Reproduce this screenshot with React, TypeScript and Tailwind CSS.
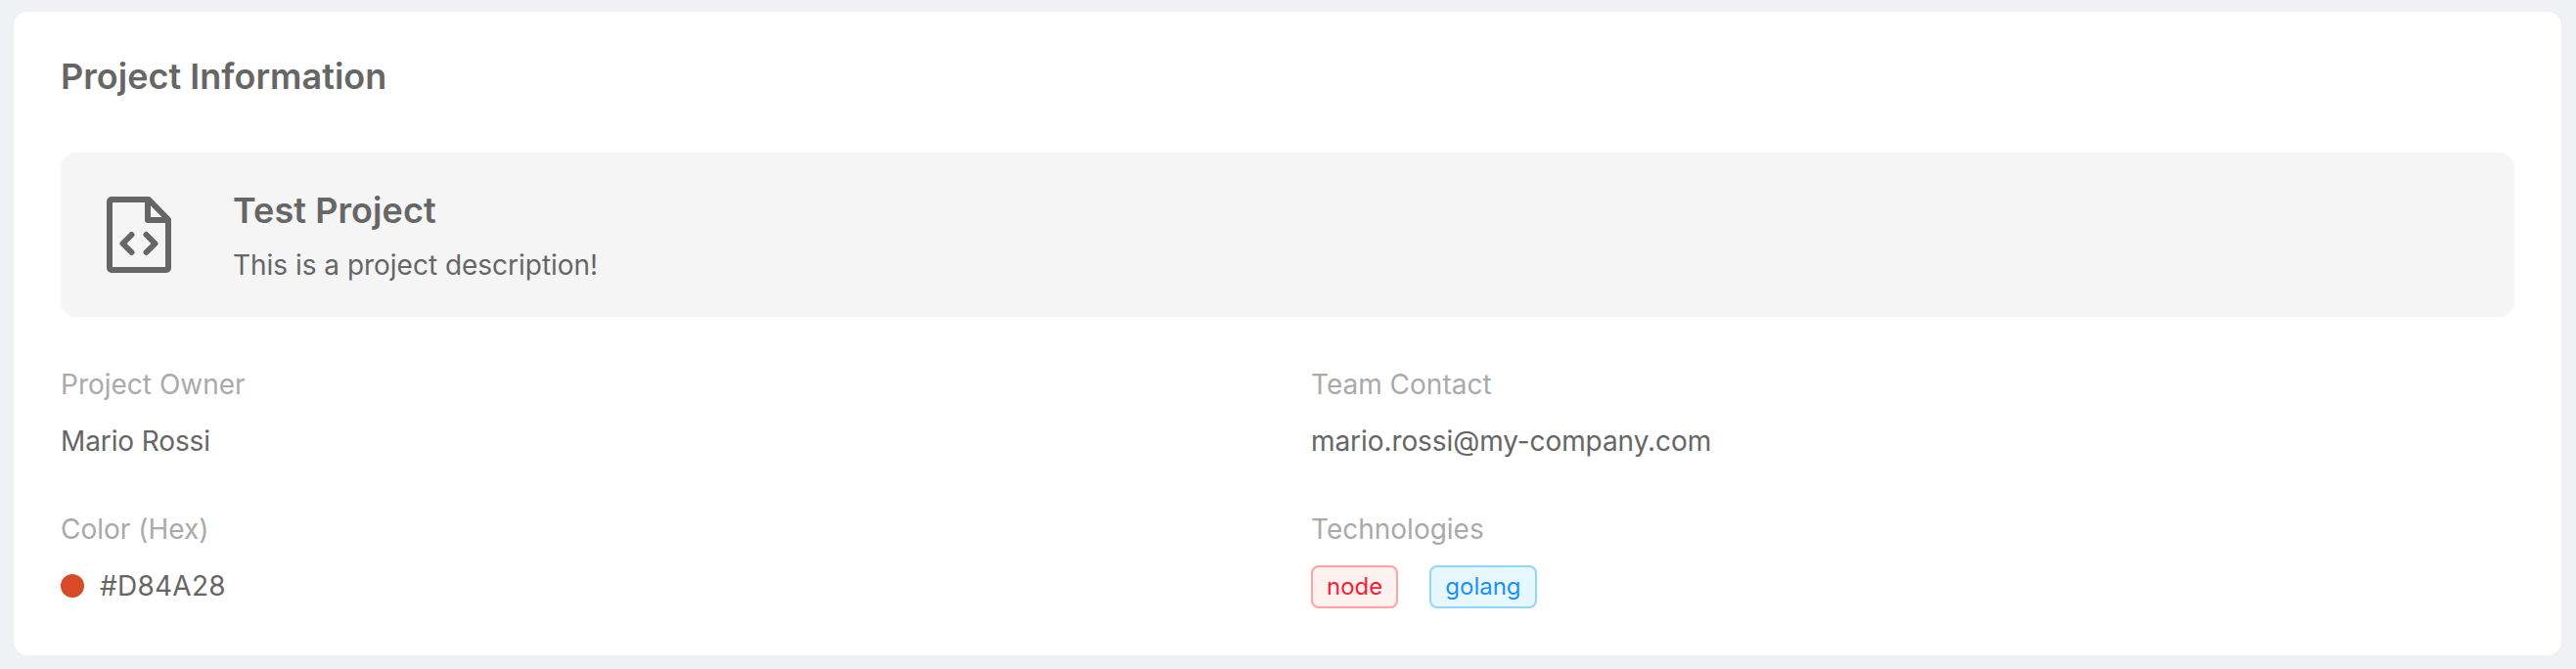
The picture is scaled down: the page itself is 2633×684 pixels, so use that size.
import React from "react";

function Field({ label, children }: { label: string; children: React.ReactNode }) {
  return (
    <div className="flex h-[148px] flex-col">
      <div className="h-[58px] text-[28px] leading-[44px] text-[#aaaaaa]">{label}</div>
      <div className="flex h-11 items-center text-[28px] leading-[44px]">{children}</div>
    </div>
  );
}

export default function App() {
  return (
    <div className="h-[684px] bg-[#f0f1f5] pt-2.5 pr-[13px] pl-3 font-['Inter',sans-serif] text-[#666666]">
      <main className="h-[662px] rounded-2xl border-2 border-[#f0f0f0] bg-white px-12 pt-[42px]">
        <h1 className="h-[102px] text-[36px] leading-[48px] font-semibold tracking-[0.02px]">Project Information</h1>
        <section className="flex h-[168px] items-center rounded-2xl bg-[#f5f5f5] pl-10">
          <svg className="h-20 w-20" viewBox="0 0 80 80" fill="none" stroke="currentColor" strokeWidth="6" strokeLinecap="round" strokeLinejoin="round">
            <path d="M12 4H50L70 24.500V74a2 2 0 0 1-2 2H12a2 2 0 0 1-2-2V6a2 2 0 0 1 2-2Z M49 5v20h20 M32.500 40L23.500 49L32.500 58 M47.500 40L56.500 49L47.500 58" />
          </svg>
          <div className="mt-1.5 ml-[56px]">
            <h2 className="text-[36px] leading-[56px] font-semibold tracking-[0.08px]">Test Project</h2>
            <p className="text-[28px] leading-[56px] tracking-[-0.02px]">This is a project description!</p>
          </div>
        </section>
        <div className="grid grid-cols-2 gap-x-12 pt-[47px]">
          <Field label="Project Owner">
            <span className="tracking-[-0.12px]">Mario Rossi</span>
          </Field>
          <Field label="Team Contact">
            <span className="tracking-[-0.08px]">mario.rossi@my-company.com</span>
          </Field>
          <Field label="Color (Hex)">
            <span className="mr-4 h-6 w-6 rounded-full bg-[#d84a28]" />
            <span className="tracking-[0.25px]">#D84A28</span>
          </Field>
          <Field label="Technologies">
            <span className="mt-0.5 mr-8 h-11 rounded-lg border-2 border-[#ffa39e] bg-[#fff1f0] px-[14px] text-2xl leading-10 text-[#f5222d]">node</span>
            <span className="mt-0.5 h-11 rounded-lg border-2 border-[#91d5ff] bg-[#e6f7ff] px-[14px] text-2xl leading-10 text-[#1890ff]">golang</span>
          </Field>
        </div>
      </main>
    </div>
  );
}
